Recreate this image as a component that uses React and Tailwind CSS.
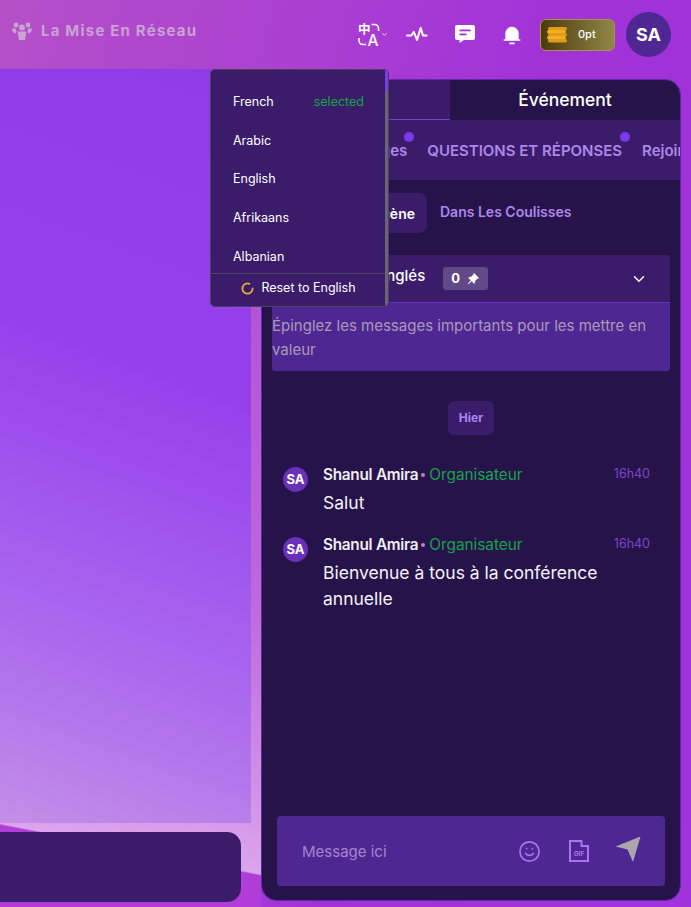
import { ChevronDown, Smile } from 'lucide-react';
import { RiNotification3Fill, RiPushpinFill } from 'react-icons/ri';

const languages = ['French', 'Arabic', 'English', 'Afrikaans', 'Albanian'];

const messages = [
  { time: '16h40', text: 'Salut' },
  { time: '16h40', text: 'Bienvenue à tous à la conférence annuelle' },
];

function GroupIcon() {
  return (
    <svg viewBox="0 0 20 18" className="w-[20px] h-[18px] fill-current">
      <circle cx="4" cy="3" r="2.4" />
      <circle cx="16" cy="3" r="2.4" />
      <circle cx="10" cy="5.5" r="3" />
      <path d="M0 6.5h3.6l1 3.5-1.2 1.6L0.8 10z" />
      <path d="M20 6.5h-3.6l-1 3.5 1.2 1.6 2.6-1.6z" />
      <path d="M5.6 9.5h8.8l-1.4 8.5H7z" />
    </svg>
  );
}

function TranslateIcon() {
  return (
    <svg viewBox="0 0 22 23" className="w-[22px] h-[23px] overflow-visible fill-none stroke-white stroke-[1.6]">
      <text x="0" y="11" fontSize="12.5" fontWeight="700" fill="white" stroke="none" fontFamily="'Noto Sans CJK SC', sans-serif">中</text>
      <text x="9.5" y="23" fontSize="15.5" fontWeight="500" fill="white" stroke="none" fontFamily="Inter, sans-serif">A</text>
      <path d="M13.5 1.5h3a4 4 0 0 1 4 4v2.5" />
      <path d="M8 21.5H5a4 4 0 0 1-4-4V15" />
    </svg>
  );
}

function PulseIcon() {
  return (
    <svg viewBox="0 0 24 16" className="w-[22px] h-[15px] fill-none stroke-white stroke-[2.2]">
      <path d="M1 9h5l2.5-4 3.5 9 4-13 2.5 8h4" strokeLinecap="round" strokeLinejoin="round" />
    </svg>
  );
}

function ChatIcon() {
  return (
    <svg viewBox="0 0 20 18" className="w-[20px] h-[18px] -mt-[2px]">
      <path fill="white" d="M2 0h16a2 2 0 0 1 2 2v11a2 2 0 0 1-2 2H9l-4.500 3v-3H2a2 2 0 0 1-2-2V2a2 2 0 0 1 2-2z" />
      <rect x="4.500" y="4.500" width="11" height="1.800" fill="#a033d6" />
      <rect x="4.500" y="8.500" width="7" height="1.800" fill="#a033d6" />
    </svg>
  );
}

function CoinStack() {
  return (
    <svg viewBox="0 0 20 16" className="w-[20px] h-[16px]">
      {[0, 3, 6, 9, 12].map((y) => (
        <rect key={y} x={y % 2 ? 0 : 1} y={y} width="19" height="3.4" rx="1.7" fill={y % 2 ? '#f0b020' : '#e09c18'} />
      ))}
    </svg>
  );
}

function GifIcon() {
  return (
    <svg viewBox="0 0 20 22" className="w-[20px] h-[22px] fill-none stroke-[#a874f0] stroke-2">
      <path d="M1 1h11.500v5h6.500v15H1z" />
      <text x="10" y="15.500" textAnchor="middle" fontSize="6.5" fontWeight="700" fill="#a874f0" stroke="none" fontFamily="Inter, sans-serif">GIF</text>
    </svg>
  );
}

function SendIcon() {
  return (
    <svg viewBox="0 0 26 26" className="w-[26px] h-[26px] fill-[#a9a6ad]">
      <path d="M0.5 10.500L25.500 0.500L18 26L12.500 13.500z" />
    </svg>
  );
}

function Spinner() {
  return (
    <svg viewBox="0 0 14 14" className="w-[13px] h-[13px] fill-none stroke-[#e8a92c] stroke-2">
      <path d="M9 1.900A5.500 5.500 0 1 0 12.500 7" strokeLinecap="round" />
    </svg>
  );
}

function LanguageMenu() {
  return (
    <div className="absolute left-[210px] top-[69px] w-[179px] h-[238px] z-10 flex flex-col rounded-[5px] border border-[#4a4458] bg-[#3a1c6b] overflow-hidden">
      <div className="flex-1 min-h-0 overflow-hidden flex flex-col pt-[13px] pl-[22px] pr-[24px]">
        {languages.map((lang) => (
          <div key={lang} className="h-[38.7px] flex-none flex items-center justify-between text-[12.5px] text-white">
            <span>{lang}</span>
            {lang === 'French' && <span className="text-[#16a34a]">selected</span>}
          </div>
        ))}
      </div>
      <div className="h-[33px] flex-none pb-[3px] pr-[2px] flex items-center justify-center gap-[7px] border-t border-[#4f4663] text-[12.5px] text-white">
        <Spinner />
        <span>Reset to English</span>
      </div>
      {/* scrollbar */}
      <div className="absolute right-0 top-0 bottom-0 w-[3px] bg-[#6b6478]">
        <div className="h-[21px] bg-[#7c3aed]"></div>
      </div>
    </div>
  );
}

function Message({ time, text }) {
  return (
    <div className="flex">
      <div className="w-[25px] h-[25px] mt-[4px] shrink-0 rounded-full bg-[#6931b8] flex items-center justify-center text-[13px] font-bold text-white">SA</div>
      <div className="ml-[15px] flex-1">
        <div className="flex items-center h-[24px] text-[15.3px]">
          <span className="font-semibold tracking-[-0.25px] text-[#f1eef6]">Shanul Amira</span>
          <span className="ml-[3px] mr-[4px] w-[4px] h-[4px] rounded-full bg-[#a98bd0]"></span>
          <span className="text-[#16a34a]">Organisateur</span>
          <span className="ml-auto text-[12.5px] text-[#7c47c9] -translate-y-[1px]">{time}</span>
        </div>
        <p className="mt-[3px] text-[17.5px] leading-[26px] text-[#f5f2fa]">{text}</p>
      </div>
    </div>
  );
}

export default function App() {
  return (
    <div className="relative w-[691px] h-[907px] overflow-hidden flex flex-col bg-[linear-gradient(105deg,#b550c8_0%,#a232d8_60%,#a033dc_100%)] font-['Inter',sans-serif]">
      <div className="flex-none h-[69px] flex items-center justify-between pl-[12px] pr-[20px]">
        <div className="flex items-center gap-[9px] -mt-[7px] text-[#c9a3d3]">
          <GroupIcon />
          <span className="text-[15px] font-bold tracking-[1.2px]">La Mise En Réseau</span>
        </div>
        <div className="flex items-center">
          <div className="flex items-center gap-[1px] text-white mr-[18px]">
            <TranslateIcon />
            <ChevronDown size={7} strokeWidth={3} />
          </div>
          <PulseIcon />
          <span className="ml-[27px]"><ChatIcon /></span>
          <RiNotification3Fill size={20} className="ml-[27px] text-white" />
          <div className="ml-[18px] w-[75px] h-[32px] pl-[6px] flex items-center rounded-[6px] border border-[#a59544] bg-[linear-gradient(90deg,#4c3a0c,#8f8746)]">
            <CoinStack />
            <span className="ml-[11px] text-[11px] font-medium text-white">0pt</span>
          </div>
          <div className="ml-[11px] w-[45px] h-[45px] rounded-full bg-[#4e2792] flex items-center justify-center text-[18px] font-bold text-white">SA</div>
        </div>
      </div>

      <div className="flex-1 flex min-h-0">
        <div className="w-[261px] flex-none flex flex-col bg-[linear-gradient(191deg,#ac44d2_0%,#bd68dc_60%,#dba4ec_90.6%,#b03dd8_90.8%)]">
          <div className="w-[251px] h-[754px] flex-none bg-[linear-gradient(200deg,#8e3ce8_0%,#9640ec_40%,#aa68ee_75%,#c48ee8_100%)]"></div>
          <div className="mt-[9px] h-[70px] w-[241px] flex-none rounded-r-[14px] bg-[#3a1c6b]"></div>
        </div>

        <div className="mt-[10px] mb-[6px] w-[420px] flex-none flex flex-col rounded-[16px] bg-[#26134a] border border-[#5c2aa8] overflow-hidden">
          <div className="h-[40px] flex-none flex">
            <div className="w-[188px] flex items-center justify-center bg-[#3a1c6b] border-b border-[#7c3ad0] text-white">Chat</div>
            <div className="flex-1 flex items-center justify-center text-[17.5px] font-medium text-white">Événement</div>
          </div>

          <div className="h-[60px] flex-none flex items-center gap-[20px] pl-[71px] pt-[2px] bg-[#3a1c6b] text-[15px] font-semibold text-[#ad87ea] whitespace-nowrap overflow-hidden">
            <span className="relative">Messages<span className="absolute -right-[7px] -top-[8px] w-[10px] h-[10px] rounded-full bg-[#7c3aed]"></span></span>
            <span className="relative">QUESTIONS ET RÉPONSES<span className="absolute -right-[8px] -top-[8px] w-[10px] h-[10px] rounded-full bg-[#7c3aed]"></span></span>
            <span>Rejoindre</span>
          </div>

          <div className="flex-none flex items-center pt-[13px] pl-[62px] text-[14px] font-semibold">
            <div className="h-[40px] w-[103px] flex items-center justify-end pr-[12px] rounded-[8px] bg-[#3a1c6b] text-white">Sur Scène</div>
            <div className="ml-[13px] -mt-[4px] text-[#ad87ea]">Dans Les Coulisses</div>
          </div>

          <div className="mt-[22px] mx-[10px] flex-none rounded-[3px] overflow-hidden">
            <div className="h-[48px] flex items-center bg-[#3a1c6b] border-b border-[#6a2fc0] px-[16px]">
              <span className="-mt-[5px] ml-[-1px] text-[15px] font-medium text-white whitespace-nowrap">Messages épinglés</span>
              <span className="ml-[18px] w-[45px] h-[23px] rounded-[3px] bg-white/20 flex items-center justify-center gap-[6px] text-[13px] font-bold text-white">
                0 <RiPushpinFill size={14} />
              </span>
              <ChevronDown size={18} strokeWidth={2} className="ml-auto mr-[6px] text-white" />
            </div>
            <p className="h-[68px] bg-[#4e2792] pt-[11px] text-[15px] leading-[24px] text-[#a99bb8]">Épinglez les messages importants pour les mettre en valeur</p>
          </div>

          <div className="mt-[30px] self-center h-[34px] w-[46px] rounded-[6px] bg-[#3a1c6b] flex items-center justify-center text-[12px] font-bold text-[#ad87f5]">Hier</div>

          <div className="mt-[28px] pl-[21px] pr-[30px] flex flex-col gap-[17px]">
            {messages.map((m) => (
              <Message key={m.text} {...m} />
            ))}
          </div>

          <div className="mt-auto mx-[15px] mb-[14px] h-[70px] flex-none rounded-[4px] bg-[#4e2792] flex items-center pl-[25px] pr-[24px]">
            <span className="mt-[2px] text-[15px] text-[#a585d0]">Message ici</span>
            <Smile size={23} strokeWidth={1.8} className="ml-auto text-[#a874f0]" />
            <span className="ml-[28px]"><GifIcon /></span>
            <span className="ml-[26px] -mt-[5px]"><SendIcon /></span>
          </div>
        </div>
      </div>

      <LanguageMenu />
    </div>
  );
}
